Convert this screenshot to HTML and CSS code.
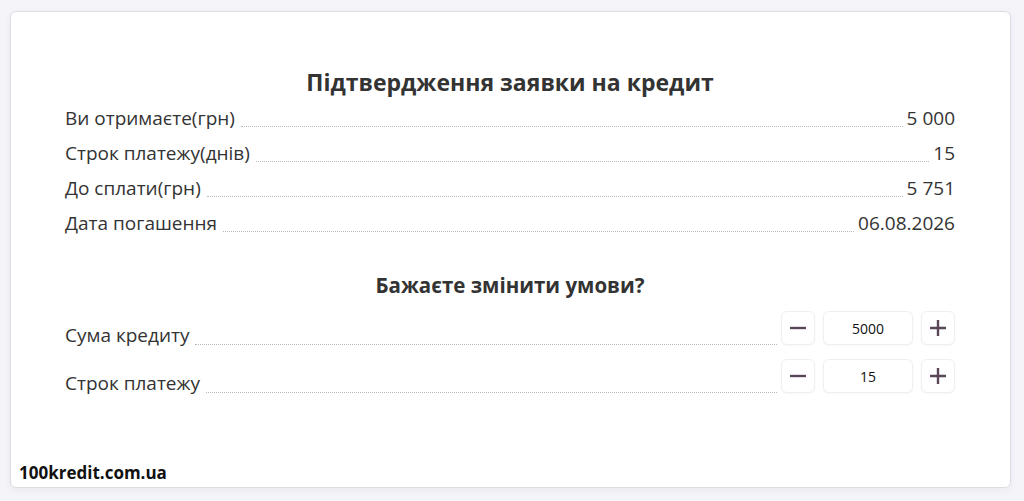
FILE: index.html
```html
<!DOCTYPE html>
<html lang="uk">
<head>
    <meta charset="utf-8">
    <title>Підтвердження заявки на кредит</title>
    <link rel="stylesheet" href="styles.css">
</head>
<body>
    <div class="card">
        <h1 class="title">Підтвердження заявки на кредит</h1>

        <div class="summary">
            <div class="row">
                <span class="label">Ви отримаєте(грн)</span>
                <span class="dots"></span>
                <span class="value">5 000</span>
            </div>
            <div class="row">
                <span class="label">Строк платежу(днів)</span>
                <span class="dots"></span>
                <span class="value">15</span>
            </div>
            <div class="row">
                <span class="label">До сплати(грн)</span>
                <span class="dots"></span>
                <span class="value">5 751</span>
            </div>
            <div class="row">
                <span class="label">Дата погашення</span>
                <span class="dots"></span>
                <span class="value">06.08.2026</span>
            </div>
        </div>

        <h2 class="subtitle">Бажаєте змінити умови?</h2>

        <div class="edit">
            <div class="row">
                <span class="label">Сума кредиту</span>
                <span class="dots"></span>
                <div class="stepper">
                    <button type="button" class="step">
                        <svg width="18" height="18" viewBox="0 0 18 18"><path d="M1 9h16" /></svg>
                    </button>
                    <input type="text" class="amount" value="5000">
                    <button type="button" class="step">
                        <svg width="18" height="18" viewBox="0 0 18 18"><path d="M1 9h16M9 1v16" /></svg>
                    </button>
                </div>
            </div>
            <div class="row">
                <span class="label">Строк платежу</span>
                <span class="dots"></span>
                <div class="stepper">
                    <button type="button" class="step">
                        <svg width="18" height="18" viewBox="0 0 18 18"><path d="M1 9h16" /></svg>
                    </button>
                    <input type="text" class="amount" value="15">
                    <button type="button" class="step">
                        <svg width="18" height="18" viewBox="0 0 18 18"><path d="M1 9h16M9 1v16" /></svg>
                    </button>
                </div>
            </div>
        </div>

        <div class="brand">100kredit.com.ua</div>
    </div>
</body>
</html>
```

FILE: styles.css
```css
body {
    margin: 0;
    padding: 11px 13px 13px 10px;
    background: #f4f4f9;
    font-family: "Open Sans", "Noto Sans", sans-serif;
    color: #333;
}

.card {
    position: relative;
    box-sizing: border-box;
    height: 477px;
    background: #fff;
    border: 1px solid #dcdce2;
    border-radius: 6px;
    box-shadow: 0 2px 8px rgba(30, 30, 80, 0.05);
    padding: 55px 55px 0 54px;
}

.title {
    margin: 0 0 9px;
    font-size: 23px;
    line-height: 30px;
    font-weight: 700;
    text-align: center;
    color: #333;
}

.row {
    display: flex;
    align-items: flex-end;
    font-size: 19px;
    line-height: 24px;
}

.summary .row {
    margin-bottom: 11px;
}

.dots {
    flex: 1;
    margin: 0 4px 3px 6px;
    border-bottom: 1px dotted #b9b9b9;
}

.value {
    text-align: right;
}

.subtitle {
    margin: 36px 0 12px;
    font-size: 20.5px;
    line-height: 28px;
    font-weight: 700;
    text-align: center;
}

.edit .row {
    margin-bottom: 14px;
    line-height: 20px;
}

.edit .dots {
    margin-bottom: 0;
}

.stepper {
    display: flex;
    gap: 8px;
}

.step,
.amount {
    box-sizing: border-box;
    height: 34px;
    background: #fff;
    border: 1px solid #efeff2;
    border-radius: 6px;
    box-shadow: 0 1px 2px rgba(0, 0, 0, 0.03);
}

.step {
    width: 34px;
    padding: 0;
    display: flex;
    align-items: center;
    justify-content: center;
    cursor: pointer;
}

.step svg {
    stroke: #5b4658;
    stroke-width: 2.4;
}

.amount {
    width: 90px;
    padding: 0;
    font-family: "Open Sans", sans-serif;
    font-size: 14px;
    text-align: center;
    color: #111;
}

.brand {
    position: absolute;
    left: 8px;
    bottom: 3px;
    font-family: "Open Sans", sans-serif;
    font-size: 17px;
    font-weight: 700;
    color: #111;
}
```
